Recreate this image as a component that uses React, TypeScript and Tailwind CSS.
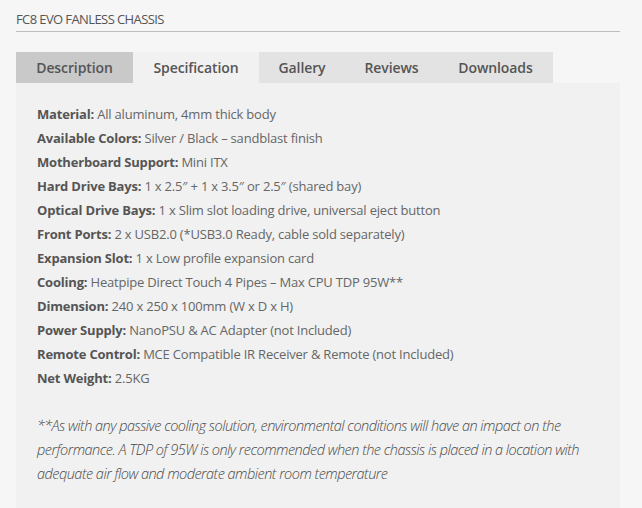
import React, { useState } from 'react';

const tabs = [
  { name: 'Description', w: 'w-[117px]' },
  { name: 'Specification', w: 'w-[126px]' },
  { name: 'Gallery', w: 'w-[86px]' },
  { name: 'Reviews', w: 'w-[93px]' },
  { name: 'Downloads', w: 'w-[115px]' },
];

const specs: [string, string][] = [
  ['Material', 'All aluminum, 4mm thick body'],
  ['Available Colors', 'Silver / Black – sandblast finish'],
  ['Motherboard Support', 'Mini ITX'],
  ['Hard Drive Bays', '1 x 2.5″ + 1 x 3.5″ or 2.5″ (shared bay)'],
  ['Optical Drive Bays', '1 x Slim slot loading drive, universal eject button'],
  ['Front Ports', '2 x USB2.0 (*USB3.0 Ready, cable sold separately)'],
  ['Expansion Slot', '1 x Low profile expansion card'],
  ['Cooling', 'Heatpipe Direct Touch 4 Pipes – Max CPU TDP 95W**'],
  ['Dimension', '240 x 250 x 100mm (W x D x H)'],
  ['Power Supply', 'NanoPSU & AC Adapter (not Included)'],
  ['Remote Control', 'MCE Compatible IR Receiver & Remote (not Included)'],
  ['Net Weight', '2.5KG'],
];

const App = () => {
  const [active, setActive] = useState('Specification');

  return (
    <div className="min-h-[508px] bg-[#f6f6f6] pl-4 pr-[22px] pt-[11px] font-['Open_Sans',sans-serif] text-[#555]">
      <h1 className="border-b border-[#bdbdbd] pb-[4px] text-[13px] leading-[16px] tracking-[-0.6px] text-[#555]">
        FC8 EVO FANLESS CHASSIS
      </h1>

      {/* Tabs */}
      <div className="mt-5 flex">
        {tabs.map((tab) => (
          <button
            key={tab.name}
            onClick={() => setActive(tab.name)}
            className={
              tab.w +
              ' h-[31px] text-center text-[14px] font-semibold tracking-[-0.1px] text-[#555] ' +
              (tab.name === active
                ? 'bg-[#f1f1f1]'
                : tab.name === 'Description'
                ? 'bg-[#c9c9c9]'
                : 'bg-[#e3e3e3]')
            }
          >
            {tab.name}
          </button>
        ))}
      </div>

      {/* Panel */}
      <div className="min-h-[425px] bg-[#f1f1f1] px-[21px] pt-[19px] pb-6 text-[13px] leading-[24px] tracking-[-0.2px]">
        {specs.map(([label, value]) => (
          <div key={label}>
            <span className="font-bold text-[#555]">{label}:</span>{' '}
            <span className="text-[#666]">{value}</span>
          </div>
        ))}
        <p className="mt-6 text-[14.5px] font-light italic leading-[24px] tracking-[-0.52px] text-[#4a4a4a]">
          **As with any passive cooling solution, environmental conditions will have an impact on the
          <br />
          performance. A TDP of 95W is only recommended when the chassis is placed in a location with
          <br />
          adequate air flow and moderate ambient room temperature
        </p>
      </div>
    </div>
  );
};

export default App;
